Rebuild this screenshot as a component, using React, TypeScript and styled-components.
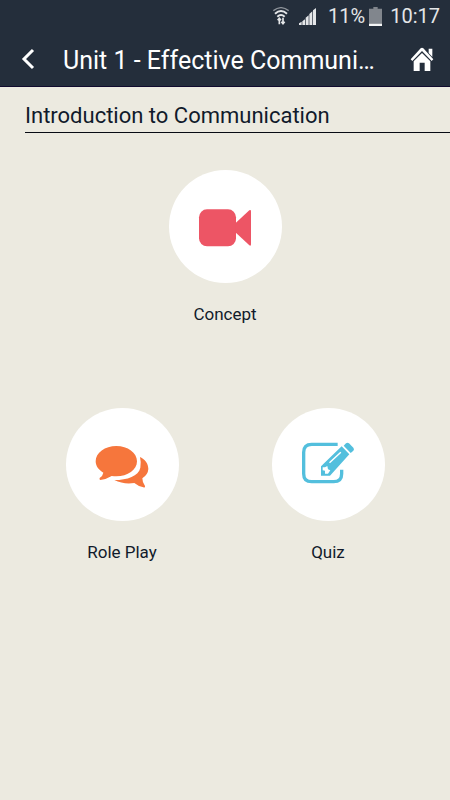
import React from "react";
import styled, { createGlobalStyle } from "styled-components";

const GlobalStyle = createGlobalStyle`
  *, *::before, *::after { box-sizing: border-box; }
  body {
    margin: 0;
    background: #eceae0;
    color: #111a2b;
    font-family: Roboto, "Liberation Sans", sans-serif;
  }
`;

const Page = styled.div`
  display: flex;
  flex-direction: column;
  min-height: 100vh;
`;

const StatusBar = styled.div`
  display: flex;
  align-items: center;
  justify-content: flex-end;
  height: 32px;
  padding-right: 10px;
  background: #242e3b;
  color: #e4e6e8;
  font-size: 20px;
  line-height: 32px;
`;

const StatusIcon = styled.svg<{ $gap: number }>`
  flex: none;
  display: block;
  margin-right: ${(p) => p.$gap}px;
`;

const BatteryLevel = styled.span`
  display: flex;
  align-items: center;
  gap: 4px;
`;

const Clock = styled.time`
  margin-left: 8px;
`;

const AppBar = styled.header`
  display: flex;
  align-items: center;
  height: 55px;
  padding: 0 16px 0 20px;
  background: #242e3b;
  border-bottom: 1px solid #100b2e;
  color: #fff;
`;

const IconButton = styled.button`
  flex: none;
  display: block;
  padding: 0;
  border: 0;
  background: none;
  color: inherit;
  cursor: pointer;
`;

const Title = styled.h1`
  flex: 1;
  min-width: 0;
  margin: 0 0 0 27px;
  padding-top: 4px;
  overflow: hidden;
  white-space: nowrap;
  font-size: 25px;
  line-height: 32px;
  font-weight: 400;
`;

const SectionTitle = styled.h2`
  margin: 13px 0 0 25px;
  border-bottom: 1px solid #080c14;
  font-size: 22px;
  line-height: 32px;
  font-weight: 400;
`;

const Activities = styled.main`
  display: grid;
  grid-template-columns: 1fr 1fr;
  row-gap: 82px;
  padding: 37px 19px;
`;

const Activity = styled.button<{ $wide?: boolean }>`
  grid-column: ${(p) => (p.$wide ? "1 / -1" : "auto")};
  justify-self: center;
  display: flex;
  flex-direction: column;
  align-items: center;
  gap: 19px;
  padding: 0;
  border: 0;
  background: none;
  color: inherit;
  font: inherit;
  font-size: 17px;
  line-height: 24px;
  cursor: pointer;
`;

const Disc = styled.span`
  display: flex;
  align-items: center;
  justify-content: center;
  width: 113px;
  height: 113px;
  border-radius: 50%;
  background: #fff;
`;

const WifiIcon = () => (
  <StatusIcon $gap={10} width="16" height="18" viewBox="0 0 48 54" fill="none" stroke="#e4e6e8" aria-label="Wi-Fi">
    <path d="M1 11Q24 -7 47 11" strokeWidth="4" opacity=".55" />
    <path d="M6 20Q24 4 42 20" strokeWidth="6" />
    <path d="M13 29Q24 19 35 29" strokeWidth="6" />
    <path d="M19 52V34M14 40l5-6 5 6M30 32v18M25 44l5 6 5-6" strokeWidth="5" />
  </StatusIcon>
);

const SignalIcon = () => (
  <StatusIcon $gap={12} width="17" height="17" viewBox="0 0 51 51" fill="#e4e6e8" aria-label="Signal">
    <path d="M0 51v-5l8-5v10zM10 51V40l8-6v17zM20 51V29l9-7v29zM31 51V18l9-8v41zM42 51V7l9-7v51z" />
  </StatusIcon>
);

const BatteryIcon = () => (
  <StatusIcon $gap={0} width="13" height="19" viewBox="0 0 39 57" aria-label="Battery">
    <path fill="#81868d" d="M13 0h13v5h13v45H0V5h13z" />
    <path fill="#f4f5f6" d="M0 50h39v7H0z" />
  </StatusIcon>
);

const BackIcon = () => (
  <svg width="16" height="22" viewBox="0 0 16 22" fill="none" stroke="currentColor" strokeWidth="3" display="block">
    <path d="M13 2L4 11l9 9" />
  </svg>
);

const HomeIcon = () => (
  <svg width="24" height="24" viewBox="0 0 72 72" fill="currentColor" display="block">
    <path d="M2 37L32 4q4-4 8 0L70 37l-5 5L36 12 7 42z" />
    <path d="M36 18L61 43v29H44V47H29v25H11V43z" />
    <path d="M56 5h11v25L56 18z" />
  </svg>
);

const VideoIcon = () => (
  <svg width="76" height="76" viewBox="6 -19 228 228" fill="#ed5565" aria-hidden="true">
    <rect x="42" y="42" width="111" height="111" rx="24" />
    <path d="M151 84L193 45q5-3 5 3v99q0 6-5 3L151 111z" />
  </svg>
);

const ChatIcon = () => (
  <svg width="76" height="76" viewBox="-3 -24 228 228" fill="#f6763c" aria-hidden="true">
    <path d="M94 33C128 33 156 53 156 79C156 105 128 124 94 124Q87 124 80 123Q66 132 46 135Q42 134 44 129Q53 124 55 113C41 105 32 93 32 79C32 53 60 33 94 33Z" />
    <path d="M165 66C181 73 190 87 190 102Q189 119 172 130Q172 143 180 153Q181 159 175 157Q160 154 148 144Q116 149 88 135C127 135 161 123 166 98Q169 82 165 66Z" />
  </svg>
);

const QuizIcon = () => (
  <svg width="76" height="76" viewBox="0 -9 228 228" fill="#53bfdd" aria-hidden="true">
    <path
      d="M143 43H65Q41 43 41 67V131Q41 155 65 155H131Q155 155 155 131V119"
      fill="none"
      stroke="#53bfdd"
      strokeWidth="10"
    />
    <path
      fillRule="evenodd"
      d="M93 109L155 49L178 73L120 137H93ZM98 112V121L105 122V131H114L121 121L114 118L112 108L105 112ZM117 97L120 100L154 68L151 65Z"
    />
    <path d="M161 47L168 40Q172 36 177 40L190 53Q194 58 190 62L182 69Z" />
  </svg>
);

const activities = [
  { label: "Concept", Icon: VideoIcon, wide: true },
  { label: "Role Play", Icon: ChatIcon },
  { label: "Quiz", Icon: QuizIcon },
];

export default function App() {
  return (
    <Page>
      <GlobalStyle />
      <StatusBar>
        <WifiIcon />
        <SignalIcon />
        <BatteryLevel>
          11%
          <BatteryIcon />
        </BatteryLevel>
        <Clock>10:17</Clock>
      </StatusBar>
      <AppBar>
        <IconButton aria-label="Back">
          <BackIcon />
        </IconButton>
        <Title>Unit 1 - Effective Communi…</Title>
        <IconButton aria-label="Home">
          <HomeIcon />
        </IconButton>
      </AppBar>
      <SectionTitle>Introduction to Communication</SectionTitle>
      <Activities>
        {activities.map(({ label, Icon, wide }) => (
          <Activity key={label} $wide={wide}>
            <Disc>
              <Icon />
            </Disc>
            {label}
          </Activity>
        ))}
      </Activities>
    </Page>
  );
}
